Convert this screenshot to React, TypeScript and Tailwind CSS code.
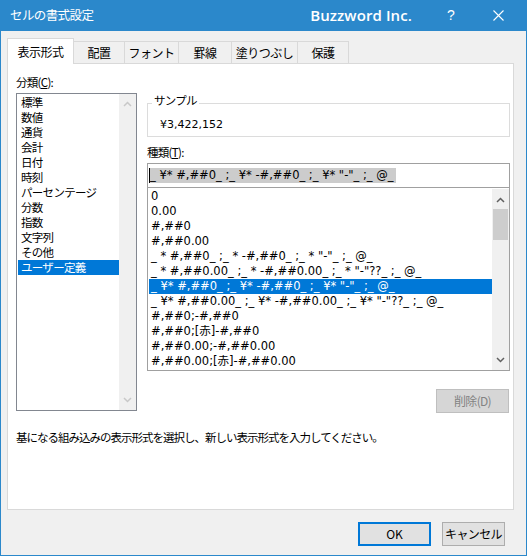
import React from "react";

const jp = "font-['Noto_Sans_CJK_JP',sans-serif]";
const fmt = "font-['DejaVu_Sans','Noto_Sans_CJK_JP',sans-serif]";

const categories = [
  "標準",
  "数値",
  "通貨",
  "会計",
  "日付",
  "時刻",
  "パーセンテージ",
  "分数",
  "指数",
  "文字列",
  "その他",
  "ユーザー定義",
];

const formats = [
  "0",
  "0.00",
  "#,##0",
  "#,##0.00",
  '_ * #,##0_ ;_ * -#,##0_ ;_ * "-"_ ;_ @_',
  '_ * #,##0.00_ ;_ * -#,##0.00_ ;_ * "-"??_ ;_ @_',
  '_ ¥* #,##0_ ;_ ¥* -#,##0_ ;_ ¥* "-"_ ;_ @_',
  '_ ¥* #,##0.00_ ;_ ¥* -#,##0.00_ ;_ ¥* "-"??_ ;_ @_',
  "#,##0;-#,##0",
  "#,##0;[赤]-#,##0",
  "#,##0.00;-#,##0.00",
  "#,##0.00;[赤]-#,##0.00",
];

const tabs = ["表示形式", "配置", "フォント", "罫線", "塗りつぶし", "保護"];
const tabWidths = ["w-[67px]", "w-[51px]", "w-[54px]", "w-[53px]", "w-[66px]", "w-[51px]"];

function Chevron({ up, color }: { up?: boolean; color: string }) {
  return (
    <svg width="9" height="6" viewBox="0 0 9 6" className="block">
      <path
        d={up ? "M1 5 L4.5 1.5 L8 5" : "M1 1 L4.5 4.5 L8 1"}
        fill="none"
        stroke={color}
        strokeWidth={1.5}
      />
    </svg>
  );
}

function TitleBar() {
  return (
    <div className="h-[31px] bg-[#2b88cb] flex items-center text-white">
      <span className={`${jp} text-[12.5px] tracking-[-0.6px] ml-[9px]`}>セルの書式設定</span>
      <span className="ml-auto font-['Open_Sans',sans-serif] font-semibold text-[15px] tracking-[0.1px]">
        Buzzword Inc.
      </span>
      <span className="ml-[34px] font-['Liberation_Sans',sans-serif] text-[14px] w-[10px] text-center">?</span>
      <svg width="11" height="11" viewBox="0 0 11 11" className="ml-[37px] mr-[22px]">
        <path d="M0.5 0.5 L10.5 10.5 M10.5 0.5 L0.5 10.5" stroke="white" strokeWidth={1.1} />
      </svg>
    </div>
  );
}

function TabStrip() {
  return (
    <div className={`${jp} flex items-end h-[25px] mt-[7px] ml-[6px] text-[12px] tracking-[-0.5px] text-black`}>
      {tabs.map((t, i) =>
        i === 0 ? (
          <div
            key={t}
            className={`${tabWidths[i]} h-[26px] -mb-px relative z-10 bg-white border border-b-0 border-[#d9d9d9] flex items-center justify-center`}
          >
            {t}
          </div>
        ) : (
          <div
            key={t}
            className={`${tabWidths[i]} h-[22px] bg-[#f0f0f0] border border-l-0 border-b-0 border-[#d9d9d9] flex items-center justify-center`}
          >
            {t}
          </div>
        )
      )}
    </div>
  );
}

function CategoryList() {
  return (
    <div className="w-[121px] h-[318px] border border-[#828790] bg-white flex">
      <div className="flex-1 pt-px">
        {categories.map((c) => (
          <div
            key={c}
            className={`h-[15px] leading-[15px] pl-[3px] ml-px ${
              c === "ユーザー定義" ? "bg-[#0078d7] text-white" : ""
            }`}
          >
            {c}
          </div>
        ))}
      </div>
      <div className="w-[17px] bg-[#f0f0f0] flex flex-col items-center justify-between py-[7px]">
        <Chevron up color="#c8c8c8" />
        <Chevron color="#c8c8c8" />
      </div>
    </div>
  );
}

function FormatList() {
  return (
    <div className={`${fmt} text-[11.5px] tracking-[0px] h-[184px] border border-[#a0a0a0] bg-white flex`}>
      <div className="flex-1 pt-px">
        {formats.map((f, i) => (
          <div
            key={i}
            className={`h-[15px] leading-[15px] pl-[2px] ml-px whitespace-pre ${
              i === 6 ? "bg-[#0078d7] text-white" : ""
            }`}
          >
            {f}
          </div>
        ))}
      </div>
      <div className="w-[17px] bg-[#f0f0f0] flex flex-col items-center pt-[8px] pb-[7px] mt-px">
        <Chevron up color="#606060" />
        <div className="w-[15px] h-[31px] bg-[#cdcdcd] mt-[6px]" />
        <div className="flex-1" />
        <Chevron color="#606060" />
      </div>
    </div>
  );
}

export default function App() {
  return (
    <div className="w-[527px] h-[556px] bg-[#f0f0f0] border-x border-b border-[#2b88cb] flex flex-col overflow-hidden">
      <TitleBar />
      <TabStrip />

      <div className={`${jp} ml-[6px] w-[507px] h-[447px] bg-white border border-[#d9d9d9] text-[11.5px] tracking-[-0.7px] text-black pt-[11px] pl-[8px]`}>
        <div className="flex gap-[10px]">
          <div>
            <div className="h-[15px] leading-[15px] mb-[3px]">
              分類(<span className="underline">C</span>):
            </div>
            <CategoryList />
          </div>

          <div className="w-[363px] pt-[28px]">
            <div className="relative h-[34px] border border-[#dcdcdc]">
              <span className="absolute left-[4px] -top-[11px] bg-white px-[2px] leading-[15px]">サンプル</span>
              <div className={`${fmt} text-[11px] tracking-[0px] pl-[12px] pt-[13px] leading-[15px]`}>¥3,422,152</div>
            </div>

            <div className="h-[15px] leading-[15px] mt-[8px]">
              種類(<span className="underline">T</span>):
            </div>

            <div className="mt-[3px] h-[24px] border border-[#a0a0a0] border-b-0 bg-white flex items-center pl-[1px]">
              <span className="w-px h-[15px] bg-black" />
              <span className={`${fmt} text-[11.5px] bg-[#cccccc] leading-[15px] pr-[2px] whitespace-pre tracking-[0px]`}>
                {'_ ¥* #,##0_ ;_ ¥* -#,##0_ ;_ ¥* "-"_ ;_ @_'}
              </span>
            </div>

            <FormatList />

            <div className="flex justify-end mt-[18px] pr-px">
              <button className="w-[73px] h-[24px] bg-[#d6d6d6] border border-[#bfbfbf] text-[#838383] text-[12px]">
                削除(D)
              </button>
            </div>
          </div>
        </div>

        <div className="mt-[17px] leading-[15px] tracking-[-1px]">
          基になる組み込みの表示形式を選択し、新しい表示形式を入力してください。
        </div>
      </div>

      <div className={`${jp} flex justify-end gap-[11px] mt-[12px] mr-[21px] text-[12px] text-black`}>
        <button className="w-[73px] h-[24px] bg-[#e1e1e1] border-2 border-[#0078d7]">OK</button>
        <button className="w-[63px] h-[24px] bg-[#e1e1e1] border border-[#adadad] tracking-[-0.6px]">
          キャンセル
        </button>
      </div>
    </div>
  );
}
